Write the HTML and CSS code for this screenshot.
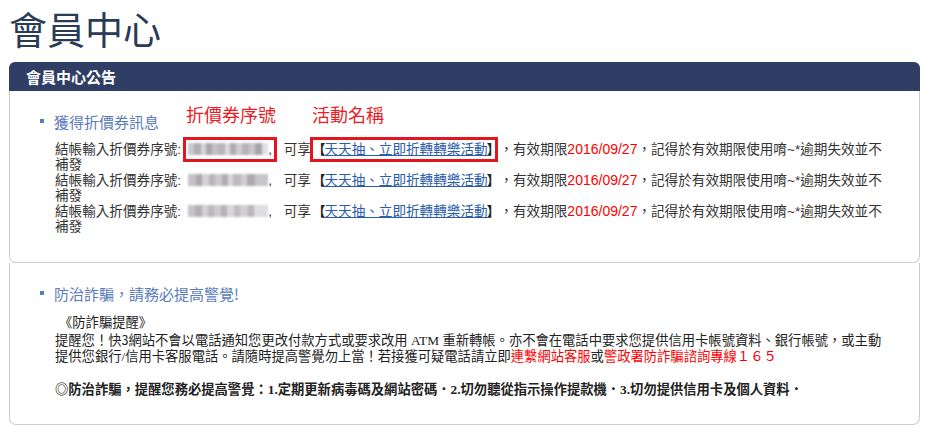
FILE: index.html
```html
<!DOCTYPE html>
<html lang="zh-Hant">
<head>
<meta charset="utf-8">
<title>會員中心</title>
<link rel="stylesheet" href="styles.css">
</head>
<body>
<h1 class="page-title">會員中心</h1>

<section class="panel">
  <div class="panel-head">會員中心公告</div>
  <div class="panel-body">
    <div class="sec-head">
      <span class="bullet"></span>
      <span class="sec-title">獲得折價券訊息</span>
      <span class="note note-serial">折價券序號</span>
      <span class="note note-name">活動名稱</span>
    </div>
    <div class="coupon-list">
      <p>結帳輸入折價券序號:<span class="serial-wrap marked"><span class="serial"></span>,</span> 可享<span class="act marked"><b class="lb">【</b><a href="#">天天抽、立即折轉轉樂活動</a><b class="rb">】</b></span>，有效期限<span class="red">2016/09/27</span>，記得於有效期限使用唷~*逾期失效並不補發</p>
      <p>結帳輸入折價券序號:<span class="serial-wrap"><span class="serial s2"></span>,</span> 可享<span class="act"><b class="lb">【</b><a href="#">天天抽、立即折轉轉樂活動</a><b class="rb">】</b></span>，有效期限<span class="red">2016/09/27</span>，記得於有效期限使用唷~*逾期失效並不補發</p>
      <p>結帳輸入折價券序號:<span class="serial-wrap"><span class="serial s3"></span>,</span> 可享<span class="act"><b class="lb">【</b><a href="#">天天抽、立即折轉轉樂活動</a><b class="rb">】</b></span>，有效期限<span class="red">2016/09/27</span>，記得於有效期限使用唷~*逾期失效並不補發</p>
    </div>
  </div>
</section>

<section class="panel panel-plain">
  <div class="panel-body body-2">
    <div class="sec-head">
      <span class="bullet"></span>
      <span class="sec-title">防治詐騙，請務必提高警覺!</span>
    </div>
    <div class="notice">
      <p class="notice-title">《防詐騙提醒》</p>
      <p>提醒您！快<span class="digit">3</span>網站不會以電話通知您更改付款方式或要求改用 ATM 重新轉帳。亦不會在電話中要求您提供信用卡帳號資料、銀行帳號，或主動提供您銀行/信用卡客服電話。請隨時提高警覺勿上當！若接獲可疑電話請立即<span class="red">連繫網站客服</span>或<span class="red">警政署防詐騙諮詢專線１６５</span></p>
      <p class="blank">&nbsp;</p>
      <p class="bold">◎防治詐騙，提醒您務必提高警覺：1.定期更新病毒碼及網站密碼．2.切勿聽從指示操作提款機．3.切勿提供信用卡及個人資料．</p>
    </div>
  </div>
</section>
</body>
</html>
```

FILE: styles.css
```css
html, body {
  margin: 0;
  padding: 0;
  background: #ffffff;
}

body {
  padding: 0 9px;
  font-family: "Liberation Sans", "Noto Sans CJK TC", sans-serif;
  color: #333333;
}

.page-title {
  margin: 4px 0 10px 0;
  font-size: 38px;
  line-height: 48px;
  font-weight: normal;
  color: #2b3a55;
  font-family: "Noto Sans CJK TC", sans-serif;
}

.panel {
  width: 911px;
  box-sizing: border-box;
}

.panel-head {
  height: 29px;
  line-height: 29px;
  background: #2f3e64;
  color: #ffffff;
  font-weight: bold;
  font-size: 15px;
  padding-left: 17px;
  border-radius: 6px 6px 0 0;
  font-family: "Noto Sans CJK TC", sans-serif;
}

.panel-body {
  border: 1px solid #cccccc;
  border-top: none;
  border-radius: 0 0 7px 7px;
  padding: 20px 31px 28px 30px;
}

.body-2 {
  padding-top: 20px;
  padding-bottom: 25px;
}

.sec-head {
  display: flex;
  align-items: center;
  height: 20px;
}

.bullet {
  width: 4px;
  height: 4px;
  background: #5b7bbd;
  margin-right: 10px;
  flex: none;
}

.sec-title {
  font-size: 15px;
  color: #5b7bbd;
  font-family: "Noto Sans CJK TC", sans-serif;
}

.note {
  color: #ec1c24;
  font-size: 18px;
  font-family: "Noto Sans CJK TC", sans-serif;
  position: relative;
  top: -7px;
}

.note-serial {
  margin-left: 27px;
}

.note-name {
  margin-left: 36px;
}

.coupon-list {
  margin-top: 11px;
  padding-left: 15px;
  font-size: 13.6px;
  line-height: 15.4px;
}

.coupon-list p {
  margin: 0;
}

.serial-wrap {
  display: inline-block;
  margin-left: 7px;
  margin-right: 8px;
}

.serial {
  display: inline-block;
  width: 80px;
  height: 12px;
  vertical-align: -1px;
  background: linear-gradient(90deg,
    #c9c9cc 0 8%, #b3b0b4 8% 16%, #d6d4d6 16% 22%, #a9a7ab 22% 30%,
    #c3c1c4 30% 38%, #b8b6ba 38% 46%, #dcdadc 46% 52%, #aeacb0 52% 60%,
    #cfcdd0 60% 68%, #b5b3b6 68% 76%, #c8c6c9 76% 84%, #a7a5a9 84% 92%,
    #e2e0e2 92% 100%);
  filter: blur(0.8px);
}

.s2 {
  background: linear-gradient(90deg,
    #c4c2c6 0 10%, #aaa8ac 10% 18%, #d4d2d4 18% 26%, #b6b4b8 26% 34%,
    #cbc9cc 34% 42%, #b0aeb2 42% 50%, #dad8da 50% 56%, #bcbabd 56% 66%,
    #d0ced1 66% 74%, #acaaae 74% 84%, #c7c5c8 84% 100%);
}

.s3 {
  background: linear-gradient(90deg,
    #c6c4c8 0 9%, #b2b0b4 9% 17%, #d2d0d3 17% 25%, #bab8bc 25% 33%,
    #cccacd 33% 41%, #b4b2b6 41% 49%, #d8d6d8 49% 57%, #bebcc0 57% 65%,
    #d1cfd2 65% 75%, #b9b7bb 75% 83%, #dedcdf 83% 100%);
}

.marked {
  outline: 3px solid #e3161f;
  outline-offset: 2px;
}

.act {
  margin-left: 4px;
  margin-right: 6px;
}

.act b {
  font-weight: bold;
  color: #222222;
}

.lb {
  margin-left: -3px;
  margin-right: -1px;
}

.rb {
  margin-left: -1px;
  margin-right: 0;
}

.act a {
  color: #2a5caa;
  text-decoration: underline;
}

.red {
  color: #ff0000;
}

.coupon-list .red {
  font-size: 14px;
}

.notice {
  margin-top: 12px;
  padding-left: 15px;
  font-family: "Liberation Serif", "Noto Sans CJK TC", serif;
  font-size: 13.3px;
  line-height: 16.5px;
  color: #222222;
}

.notice p {
  margin: 0;
}

.notice .digit {
  font-family: "Noto Sans CJK TC", sans-serif;
  font-size: 12.5px;
}

.notice-title {
  padding-left: 4px;
}

.bold {
  font-weight: bold;
}
```
